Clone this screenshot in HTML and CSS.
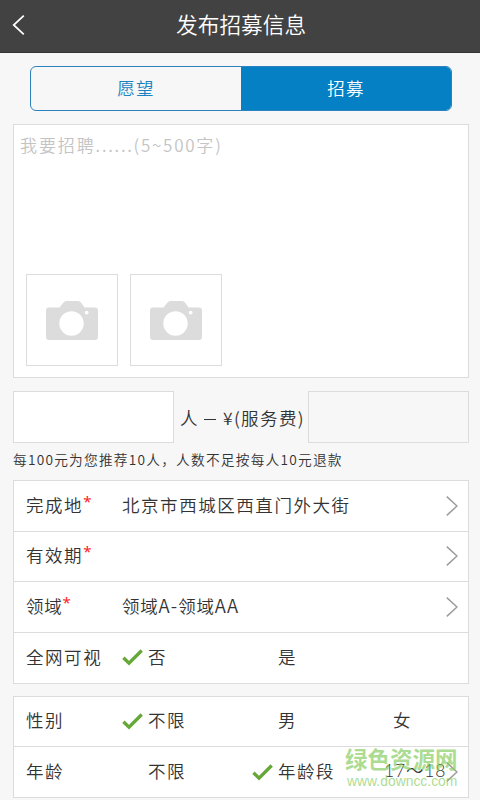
FILE: index.html
```html
<!DOCTYPE html>
<html lang="zh-CN">
<head>
<meta charset="utf-8">
<title>发布招募信息</title>
<link rel="stylesheet" href="styles.css">
</head>
<body>
<svg class="defs" width="0" height="0">
  <symbol id="camera" viewBox="0 0 52 39">
    <path fill="#dcdcdc" fill-rule="evenodd" d="M3 6.5H13.5L17.5 1.5Q18.7 0 20.5 0H32Q34 0 35 1.5L38.5 6.5H49Q52 6.5 52 9.5V36Q52 39 49 39H3Q0 39 0 36V9.5Q0 6.5 3 6.5ZM25.5 10.3A12.2 12.2 0 1 0 25.5 34.700A12.200 12.200 0 1 0 25.500 10.300ZM40.700 9.700A1.900 1.900 0 1 0 40.700 13.500A1.900 1.900 0 1 0 40.700 9.700Z"/>
  </symbol>
  <symbol id="arrow" viewBox="0 0 12 20">
    <path fill="none" stroke="#9c9c9c" stroke-width="1.500" d="M.8.6L11 10L.8 19.400"/>
  </symbol>
  <symbol id="check" viewBox="0 0 21 17">
    <path fill="none" stroke="#66a837" stroke-width="3.300" d="M1.400 8.700L7 14.200L19.700 1.500"/>
  </symbol>
</svg>
<header class="header">
  <svg class="back" viewBox="0 0 12 20"><path fill="none" stroke="#fff" stroke-width="1.700" d="M11.300.7L1.200 10L11.300 19.300"/></svg>
  <h1 class="title">发布招募信息</h1>
</header>
<main class="page">
  <nav class="tabs">
    <span class="tab">愿望</span>
    <span class="tab tab-active">招募</span>
  </nav>
  <section class="editor">
    <p class="placeholder">我要招聘<span class="latin">......(5~500</span>字<span class="latin">)</span></p>
    <div class="photos">
      <div class="photo"><svg class="camera"><use href="#camera"/></svg></div>
      <div class="photo"><svg class="camera"><use href="#camera"/></svg></div>
    </div>
  </section>
  <section class="fee">
    <div class="box"></div>
    <div class="fee-text"><span>人</span><span class="dash"></span><span class="price"><span class="latin">¥(</span>服务费<span class="latin">)</span></span></div>
    <div class="box box-off"></div>
  </section>
  <p class="note">每<span class="latin">100</span>元为您推荐<span class="latin">10</span>人，人数不足按每人<span class="latin">10</span>元退款</p>
  <section class="group">
    <div class="row"><span class="label">完成地<i class="star">*</i></span><span class="value">北京市西城区西直门外大街</span><svg class="arrow"><use href="#arrow"/></svg></div>
    <div class="row"><span class="label">有效期<i class="star">*</i></span><svg class="arrow"><use href="#arrow"/></svg></div>
    <div class="row"><span class="label tight">领域<i class="star">*</i></span><span class="value tight">领域<span class="latin">A-</span>领域<span class="latin">AA</span></span><svg class="arrow"><use href="#arrow"/></svg></div>
    <div class="row choices"><span class="label">全网可视</span><svg class="check"><use href="#check"/></svg><span class="opt">否</span><span></span><span class="opt">是</span></div>
  </section>
  <section class="group">
    <div class="row choices"><span class="label">性别</span><svg class="check"><use href="#check"/></svg><span class="opt">不限</span><span></span><span class="opt">男</span><span class="opt">女</span></div>
    <div class="row choices"><span class="label">年龄</span><span></span><span class="opt">不限</span><svg class="check"><use href="#check"/></svg><span class="opt">年龄段</span><span class="range">17～18</span><svg class="arrow"><use href="#arrow"/></svg></div>
  </section>
</main>
<div class="mark"><div class="mark-name">绿色资源网</div><div class="mark-url">www.downcc.com</div></div>
</body>
</html>
```

FILE: styles.css
```css
* { box-sizing: border-box; margin: 0; padding: 0; }
body {
  width: 480px; height: 800px; overflow: hidden; position: relative;
  background: #f7f7f7; color: #333;
  font: 350 17.500px/24px Lato, "Noto Sans CJK SC", sans-serif;
  white-space: nowrap;
}
svg { display: block; flex: none; }
.defs { position: absolute; }
.latin { font-family: "Noto Sans CJK SC", sans-serif; line-height: 1; }
.header { height: 53px; background: #424242; border-bottom: 1px solid #353535; display: flex; align-items: center; padding: 0 12px; }
.back { width: 13px; height: 20px; margin-top: -2px; }
.title { margin-left: 151px; color: #fff; font-size: 21.700px; line-height: 30px; font-weight: 350; margin-top: -3px; }
.page { padding: 13px 11px 0 13px; }
.tabs { display: flex; height: 45px; margin: 0 17px; border: 1.500px solid #2d82bd; border-radius: 6px; overflow: hidden; }
.tab { flex: 1; display: flex; align-items: center; justify-content: center; color: #1b83c2; letter-spacing: 1.200px; }
.tab-active { background: #0580c4; color: #fff; }
.editor { height: 254px; margin-top: 13px; border: 1px solid #dcdcdc; background: #fff; padding: 9px 6px 11px; display: flex; flex-direction: column; justify-content: space-between; }
.placeholder { color: #c4c4c4; font-size: 17px; letter-spacing: 1.900px; }
.placeholder .latin { letter-spacing: 1.750px; }
.photos { display: flex; gap: 12px; margin-left: 6px; }
.photo { width: 92px; height: 92px; border: 1px solid #dcdcdc; display: flex; align-items: center; justify-content: center; }
.camera { width: 52px; height: 39px; }
.fee { height: 52px; margin-top: 13px; display: flex; }
.box { width: 161px; border: 1px solid #dcdcdc; background: #fff; }
.box-off { background: #f7f7f7; }
.fee-text { width: 134px; padding: 3px 0 0 6px; display: flex; align-items: center; letter-spacing: 1.400px; }
.dash { width: 12px; height: 1px; background: #333; margin: 1px 7px 0 5px; }
.note { height: 20px; font-size: 13.700px; line-height: 20px; letter-spacing: 1.230px; margin-top: 7px; }
.group { margin-top: 10px; border: 1px solid #dcdcdc; background: #fff; }
.group + .group { margin-top: 12px; }
.row { height: 50.500px; display: grid; grid-template-columns: 96px 1fr 12px; align-items: center; padding: 0 10px 0 12px; border-bottom: 1px solid #dcdcdc; letter-spacing: 1.550px; }
.row:last-child { border-bottom: 0; height: 50px; }
.row .arrow { grid-column: -2; }
.choices { grid-template-columns: 96px 26px 104px 26px 115px 1fr 12px; }
.choices .range { margin: -2px 0 0 -9px; letter-spacing: .8px; }
.arrow { width: 12px; height: 20px; }
.check { width: 21px; height: 17px; }
.star { color: #f22; font: 400 15px/10px "Noto Sans", sans-serif; letter-spacing: 0; vertical-align: 5px; }
.tight { letter-spacing: .7px; }
.tight .latin { font-size: 18.500px; letter-spacing: 1.200px; }
.mark { position: absolute; left: 345px; top: 745px; color: rgba(135,205,95,.7); }
.mark-name { font: 700 22.500px/26px "Noto Sans CJK SC", sans-serif; }
.mark-url { font: 400 13.900px/20px "Liberation Sans", sans-serif; margin: 0 0 0 2px; }
```
